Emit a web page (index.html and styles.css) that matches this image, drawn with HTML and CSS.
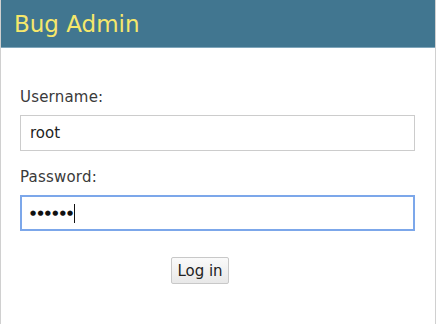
FILE: index.html
```html
<!DOCTYPE html>
<html>
<head>
<meta charset="utf-8">
<link rel="stylesheet" href="styles.css">
</head>
<body>
<div class="container">
  <div class="header">
    <h1 class="brand">Bug Admin</h1>
  </div>
  <form class="login">
    <div class="row">
      <label class="label">Username:</label>
      <input class="field" type="text" value="root">
    </div>
    <div class="row">
      <label class="label">Password:</label>
      <div class="field focus"><span class="dots">&#9679;&#9679;&#9679;&#9679;&#9679;&#9679;</span><span class="caret"></span></div>
    </div>
    <div class="submit">
      <button type="button" class="btn">Log in</button>
    </div>
  </form>
</div>
</body>
</html>
```
FILE: styles.css
```css
html, body {
  margin: 0;
  padding: 0;
  background: #fff;
}
body {
  font-family: "DejaVu Sans", Verdana, sans-serif;
  color: #333;
}
.container {
  width: 434px;
  height: 324px;
  border-left: 1px solid #d0d0d0;
  border-right: 1px solid #d0d0d0;
  box-sizing: content-box;
}
.header {
  background: #417690;
  height: 47px;
  border-bottom: 1px solid #7fa6bb;
  display: flex;
  align-items: center;
  padding-left: 13px;
}
.brand {
  margin: 0;
  font-weight: normal;
  font-size: 23px;
  color: #f5e76b;
}
.login {
  padding: 40px 19px 0 19px;
}
.row {
  display: flex;
  flex-direction: column;
  margin-bottom: 17px;
}
.label {
  font-size: 15px;
  color: #3a3a3a;
  margin-bottom: 9px;
  letter-spacing: 0.2px;
}
.field {
  box-sizing: border-box;
  width: 395px;
  height: 36px;
  border: 1px solid #ccc;
  padding: 0 9px;
  font-family: "DejaVu Sans", Verdana, sans-serif;
  font-size: 15px;
  color: #222;
  outline: none;
  margin: 0;
}
.focus {
  border: 2px solid #7ca7ea;
  display: flex;
  align-items: center;
  padding-left: 8px;
}
.dots {
  font-size: 7px;
  letter-spacing: 1.3px;
  color: #111;
}
.caret {
  display: inline-block;
  width: 1px;
  height: 19px;
  background: #111;
}
.submit {
  display: flex;
  justify-content: center;
  padding-top: 9px;
  padding-right: 36px;
}
.btn {
  font-family: "DejaVu Sans", Verdana, sans-serif;
  font-size: 15px;
  color: #222;
  background: linear-gradient(#fafafa, #e8e8e8);
  border: 1px solid #c8c8c8;
  border-radius: 2px;
  padding: 3px 5px;
  height: 27px;
}
```
